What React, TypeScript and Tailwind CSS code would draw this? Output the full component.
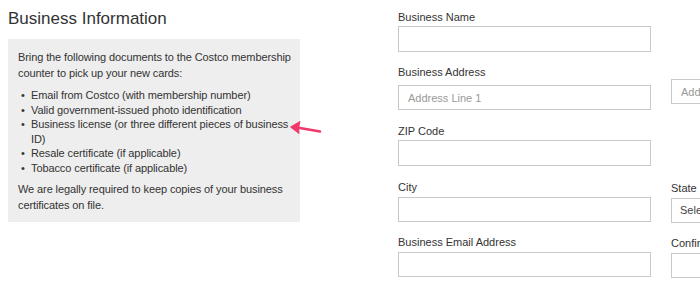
import React from "react";

const docs = [
  "Email from Costco (with membership number)",
  "Valid government-issued photo identification",
  "Business license (or three different pieces of business ID)",
  "Resale certificate (if applicable)",
  "Tobacco certificate (if applicable)",
];

function Field({
  label,
  placeholder,
  className,
  gap,
  h = "h-[26px]",
}: {
  label: string;
  placeholder?: string;
  className: string;
  gap: string;
  h?: string;
}) {
  return (
    <div className={className}>
      <div className={`text-[11px] leading-[14px] text-[#333] ${gap}`}>{label}</div>
      <input
        placeholder={placeholder}
        className={`block w-[253px] ${h} border border-[#c9c9c9] bg-white px-[9px] text-[11px] text-[#333] outline-none placeholder:text-[#999]`}
      />
    </div>
  );
}

export default function App() {
  return (
    <div
      className="relative h-[284px] w-[700px] overflow-hidden bg-white"
      style={{ fontFamily: '"Liberation Sans", Arial, sans-serif' }}
    >
      <div className="flex">
        {/* left column */}
        <div className="w-[390px] shrink-0 pl-2">
          <h2 className="pt-[9px] text-[17px] leading-[20px] font-normal text-[#333]">
            Business Information
          </h2>
          <div className="mt-[10px] w-[292px] bg-[#eeeeee] pt-[10px] pr-0 pb-[9px] pl-[10px] text-[11px] tracking-[-0.1px] text-[#333]">
            <p className="leading-[16px]">
              Bring the following documents to the Costco membership counter to pick up your new cards:
            </p>
            <ul className="mt-[7px] leading-[14.5px]">
              {docs.map((d) => (
                <li key={d} className="flex">
                  <span className="w-[13px] shrink-0 pl-[3px]">•</span>
                  <span>{d}</span>
                </li>
              ))}
            </ul>
            <p className="mt-[6px] pr-[10px] leading-[16px]">
              We are legally required to keep copies of your business certificates on file.
            </p>
          </div>
        </div>

        {/* right column */}
        <div className="flex shrink-0 gap-5 pl-2">
          <div className="w-[253px] shrink-0 pt-[10px]">
            <Field label="Business Name" className="" gap="mb-[2px]" />
            <Field
              label="Business Address"
              placeholder="Address Line 1"
              className="mt-[13px]"
              gap="mb-[6px]"
              h="h-[25px]"
            />
            <Field label="ZIP Code" className="mt-[14px]" gap="mb-[2px]" />
            <Field label="City" className="mt-[14px]" gap="mb-[3px]" h="h-[25px]" />
            <Field label="Business Email Address" className="mt-[13px]" gap="mb-[3px]" h="h-[25px]" />
          </div>
          <div className="w-[253px] shrink-0 pt-[10px]">
            <div className="mt-[69px]">
              <input
                placeholder="Address Line 2"
                className="block h-[25px] w-[253px] border border-[#c9c9c9] bg-white px-[9px] text-[11px] outline-none placeholder:text-[#999]"
              />
            </div>
            <div className="mt-[77px]">
              <div className="mb-[3px] text-[11px] leading-[14px] text-[#333]">State</div>
              <div className="flex h-[25px] w-[253px] items-center border border-[#c9c9c9] bg-white px-[8px] text-[11px] text-[#444]">
                Select...
              </div>
            </div>
            <div className="mt-[13px]">
              <div className="mb-[3px] text-[11px] leading-[14px] text-[#333]">Confirm Business Email Address</div>
              <input className="block h-[25px] w-[253px] border border-[#c9c9c9] bg-white outline-none" />
            </div>
          </div>
        </div>
      </div>

      {/* annotation arrow */}
      <svg
        className="absolute left-[288px] top-[119px]"
        width="36"
        height="18"
        viewBox="0 0 36 18"
        fill="none"
      >
        <path d="M32 12.5 L9 8.5" stroke="#f0386b" strokeWidth="2.6" strokeLinecap="round" />
        <path d="M2.5 8 L12 2.5 L10.5 8.8 L11 14.5 Z" fill="#f0386b" strokeLinejoin="round" stroke="#f0386b" strokeWidth="1" />
      </svg>
    </div>
  );
}
